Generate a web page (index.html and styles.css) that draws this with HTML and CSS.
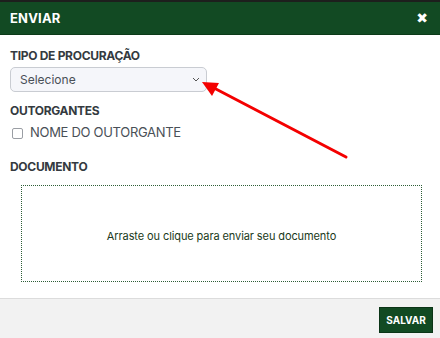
FILE: index.html
```html
<!DOCTYPE html>
<html lang="pt-BR">
  <head>
    <meta charset="UTF-8" />
    <title>Enviar</title>
    <link rel="stylesheet" href="styles.css">
  </head>
  <body>
    <div class="modal">
      <div class="modal-header">
        <span class="modal-title">ENVIAR</span>
        <span class="modal-close">&#10006;</span>
      </div>
      <div class="modal-body">
        <label class="field-label">TIPO DE PROCURAÇÃO</label>
        <div class="select">
          <span>Selecione</span>
          <svg class="chevron" width="8" height="5" viewBox="0 0 8 5"><path d="M1 1l3 3 3-3" fill="none" stroke="#555" stroke-width="1"/></svg>
        </div>

        <label class="field-label outorgantes">OUTORGANTES</label>
        <label class="check-row">
          <span class="checkbox"></span>
          <span>NOME DO OUTORGANTE</span>
        </label>

        <label class="field-label documento">DOCUMENTO</label>
        <div class="dropzone">Arraste ou clique para enviar seu documento</div>
      </div>
      <div class="modal-footer">
        <button class="btn-save">SALVAR</button>
      </div>
    </div>

    <svg class="annotation" width="440" height="338" viewBox="0 0 440 338">
      <line x1="346" y1="157" x2="214" y2="88" stroke="#f40000" stroke-width="3" stroke-linecap="round"/>
      <polygon points="202,82 219,83 212,96" fill="#f40000"/>
    </svg>
  </body>
</html>
```

FILE: styles.css
```css
* {
  margin: 0;
  padding: 0;
  box-sizing: border-box;
  font-family: 'Inter', 'Liberation Sans', sans-serif;
}
body {
  position: relative;
  width: 440px;
  height: 338px;
  overflow: hidden;
  background: #fff;
}

.modal {
  width: 440px;
  height: 338px;
  display: flex;
  flex-direction: column;
}

.modal-header {
  height: 35px;
  border-top: 2px solid #1d1f1d;
  border-bottom: 1px solid #0c3a18;
  background: #124a23;
  color: #fff;
  display: flex;
  align-items: center;
  justify-content: space-between;
  padding: 0 12px 0 10px;
}
.modal-title {
  font-size: 13px;
  font-weight: 700;
  letter-spacing: 0.2px;
}
.modal-close {
  font-size: 14px;
  font-weight: 700;
  font-family: 'DejaVu Sans', sans-serif;
}

.modal-body {
  flex: 1;
  padding: 14px 10px 0 10px;
}

.field-label {
  display: block;
  font-size: 12px;
  font-weight: 700;
  color: #343a40;
  line-height: 14px;
  margin-bottom: 4px;
  letter-spacing: -0.3px;
}
.outorgantes {
  margin-top: 12px;
  margin-bottom: 5px;
}
.documento {
  margin-top: 19px;
  margin-bottom: 11px;
}

.select {
  width: 197px;
  height: 25px;
  border: 1px solid #c9ccd2;
  border-radius: 5px;
  background: #f5f6fa;
  display: flex;
  align-items: center;
  justify-content: space-between;
  padding: 0 6px 0 9px;
  font-size: 12px;
  color: #495057;
}

.check-row {
  display: flex;
  align-items: center;
  gap: 7px;
  padding-left: 2px;
  font-size: 13px;
  color: #495057;
  height: 18px;
  letter-spacing: -0.3px;
}
.checkbox {
  width: 11px;
  height: 11px;
  border: 1px solid #9a9ea4;
  border-radius: 2px;
  background: #fff;
  margin-top: 2px;
}

.dropzone {
  margin-left: 11px;
  width: 401px;
  height: 97px;
  border: 1px dotted #2d5e37;
  display: flex;
  align-items: center;
  justify-content: center;
  padding-top: 4px;
  font-size: 11px;
  letter-spacing: -0.1px;
  color: #1a3a20;
}

.modal-footer {
  height: 40px;
  border-top: 1px solid #dcdcdc;
  background: #f2f2f2;
  display: flex;
  justify-content: flex-end;
  align-items: flex-start;
  padding: 8px 7px 0 0;
}
.btn-save {
  width: 54px;
  height: 26px;
  border: 1px solid #0b3517;
  background: #124a23;
  color: #fff;
  font-size: 10px;
  font-weight: 700;
  cursor: pointer;
}

.annotation {
  position: absolute;
  left: 0;
  top: 0;
  pointer-events: none;
}
```
